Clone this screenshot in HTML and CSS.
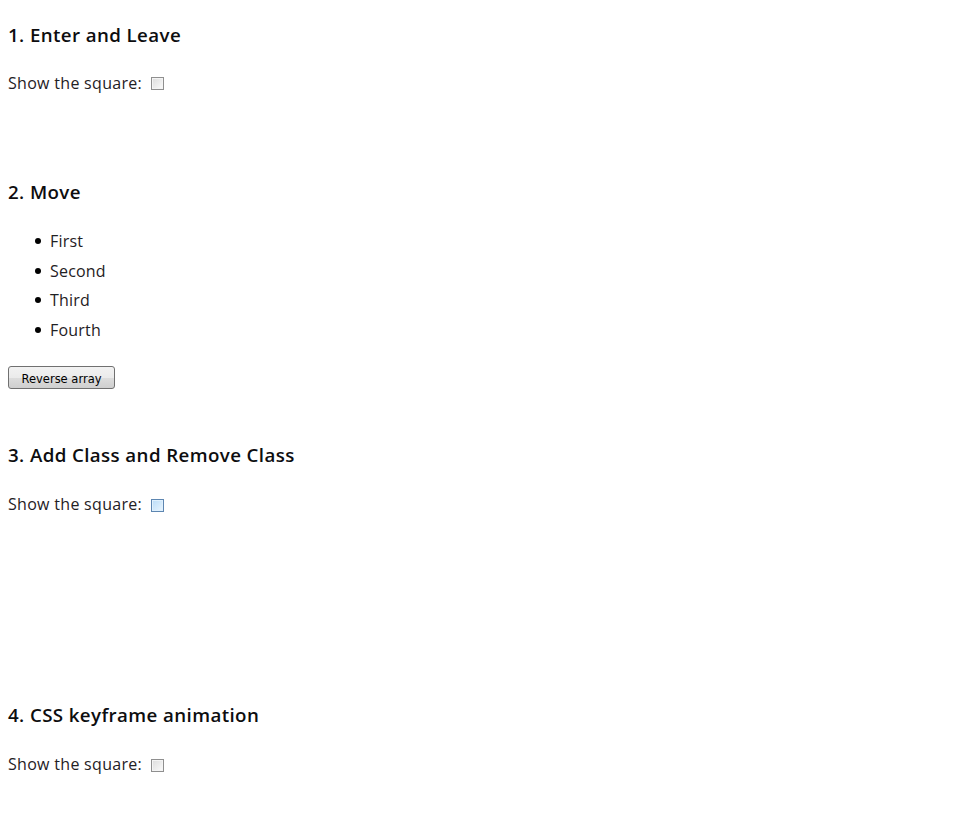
FILE: index.html
```html
<!DOCTYPE html>
<html>
<head>
<meta charset="utf-8">
<link rel="stylesheet" href="styles.css">
</head>
<body>
<div class="page">
  <section class="demo demo-enter">
    <h3 class="title">1. Enter and Leave</h3>
    <p class="toggle"><label>Show the square:</label><input type="checkbox" class="check"></p>
  </section>
  <section class="demo demo-move">
    <h3 class="title">2. Move</h3>
    <ul class="items">
      <li>First</li>
      <li>Second</li>
      <li>Third</li>
      <li>Fourth</li>
    </ul>
    <button class="btn">Reverse array</button>
  </section>
  <section class="demo demo-class">
    <h3 class="title">3. Add Class and Remove Class</h3>
    <p class="toggle"><label>Show the square:</label><input type="checkbox" class="check check-focus"></p>
  </section>
  <section class="demo demo-keyframe">
    <h3 class="title">4. CSS keyframe animation</h3>
    <p class="toggle"><label>Show the square:</label><input type="checkbox" class="check"></p>
  </section>
</div>
</body>
</html>
```
FILE: styles.css
```css
html, body {
  margin: 0;
  padding: 0;
  background: #fff;
}
body {
  font-family: "Open Sans", "DejaVu Sans", sans-serif;
  font-size: 16px;
  color: #1f2124;
}
.page {
  padding: 0 8px;
}
.demo {
  display: flow-root;
}
.title {
  font-size: 18.72px;
  font-weight: 600;
  letter-spacing: 0.4px;
  line-height: 25.5px;
  margin: 0;
  color: #0d0d0f;
}
.toggle {
  margin: 0;
  line-height: 21.8px;
  letter-spacing: 0.3px;
  display: flex;
  align-items: center;
}
.toggle label {
  position: relative;
  top: 1px;
}
.check {
  appearance: none;
  -webkit-appearance: none;
  width: 13px;
  height: 13px;
  margin: 0 0 0 9px;
  border: 1px solid #8f8f8f;
  background: linear-gradient(135deg, #dcdcdc, #fbfbfb);
  box-shadow: inset 0 0 0 1px #f4f4f4;
  position: relative;
  top: 1px;
}
.check-focus {
  border-color: #5d86b1;
  background: linear-gradient(135deg, #b9dcf8, #e9f5fe);
  box-shadow: inset 0 0 0 1px #dff0fd;
}
.demo-enter .title { margin-top: 22px; }
.demo-enter .toggle { margin-top: 24.5px; }
.demo-move .title { margin-top: 85px; }
.items {
  margin: 22.5px 0 0;
  padding-left: 42px;
  line-height: 29.7px;
  list-style: none;
  letter-spacing: 0.2px;
}
.items li::before {
  content: "";
  display: inline-block;
  width: 6px;
  height: 6px;
  border-radius: 50%;
  background: #000;
  margin-left: -15px;
  margin-right: 9px;
  vertical-align: 3px;
}
.btn {
  display: block;
  margin-top: 20px;
  font-family: "DejaVu Sans", sans-serif;
  font-size: 11.5px;
  height: 23px;
  width: 107px;
  padding: 3px 0 0;
  border: 1px solid #707070;
  border-radius: 3px;
  background: linear-gradient(#f2f2f2 0%, #ebebeb 50%, #dddddd 51%, #cfcfcf 100%);
  color: #000;
}
.demo-class .title { margin-top: 53px; }
.demo-class .toggle { margin-top: 26px; }
.demo-keyframe .title { margin-top: 187px; }
.demo-keyframe .toggle { margin-top: 26px; }
```
